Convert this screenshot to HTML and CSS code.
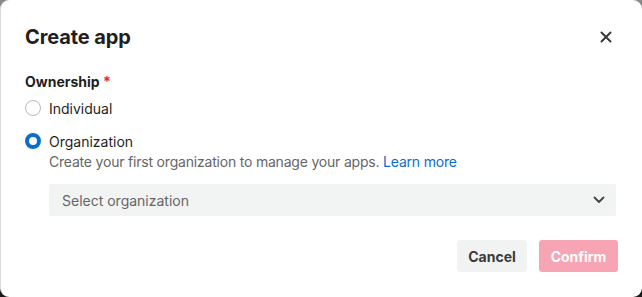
FILE: index.html
```html
<!DOCTYPE html>
<html lang="en">

<head>
    <meta charset="UTF-8">
    <meta name="viewport" content="width=device-width, initial-scale=1.0">
    <title>Create app</title>
    <link rel="stylesheet" href="styles.css">
</head>

<body>
    <div class="dialog">
        <div class="head">
            <h2>Create app</h2>
            <button class="close" aria-label="Close">
                <svg width="12" height="12" viewBox="0 0 12 12">
                    <path d="M1.5 1.5 L10.5 10.5 M10.5 1.5 L1.5 10.5" stroke="#3a3a3a" stroke-width="2" stroke-linecap="round" />
                </svg>
            </button>
        </div>

        <div class="field">
            <div class="label">Ownership <span class="req">*</span></div>
            <label class="radio">
                <span class="dot"></span>
                <span>Individual</span>
            </label>
            <label class="radio">
                <span class="dot on"></span>
                <span>Organization</span>
            </label>
            <p class="hint">Create your first organization to manage your apps. <a href="#">Learn more</a></p>
            <div class="select">
                <span>Select organization</span>
                <svg width="12" height="8" viewBox="0 0 12 8">
                    <path d="M1.5 1.5 L6 6 L10.5 1.5" fill="none" stroke="#444" stroke-width="1.8" stroke-linecap="round" stroke-linejoin="round" />
                </svg>
            </div>
        </div>

        <div class="foot">
            <button class="btn cancel">Cancel</button>
            <button class="btn confirm">Confirm</button>
        </div>
    </div>
</body>

</html>
```

FILE: styles.css
```css
body {
    margin: 0;
    height: 297px;
    background: linear-gradient(to bottom, #8a8a8a, #1a1a1a);
    font-family: Inter, "Noto Sans", Arial, sans-serif;
    color: #1f1f1f;
}

.dialog {
    box-sizing: border-box;
    height: 297px;
    background: #fff;
    border-left: 1px solid #d9d9d9;
    border-radius: 9px;
    padding: 22px 24px 0 24px;
}

.head {
    display: flex;
    align-items: center;
    justify-content: space-between;
    height: 30px;
}

.head h2 {
    margin: 0;
    font-size: 20px;
    font-weight: 700;
    color: #1f1f1f;
    letter-spacing: -0.1px;
}

.close {
    border: none;
    background: none;
    padding: 0;
    margin-right: 6px;
    width: 12px;
    height: 12px;
    display: flex;
}

.field {
    margin-top: 21px;
}

.label {
    font-size: 14px;
    font-weight: 700;
    height: 18px;
    line-height: 18px;
}

.req {
    color: #e02a3c;
}

.radio {
    display: flex;
    align-items: center;
    gap: 8px;
    font-size: 14px;
    height: 18px;
    margin-top: 8px;
}

.radio + .radio {
    margin-top: 15px;
}

.dot {
    box-sizing: border-box;
    width: 16px;
    height: 16px;
    border-radius: 50%;
    border: 1px solid #b8b8b8;
    background: #fff;
}

.dot.on {
    border: 4.5px solid #0a6ec8;
}

.hint {
    margin: 3px 0 0 24px;
    font-size: 14px;
    line-height: 18px;
    color: #666;
    letter-spacing: -0.2px;
}

.hint a {
    color: #0a6ec8;
    text-decoration: none;
}

.select {
    margin: 13px 2px 0 24px;
    height: 32px;
    background: #f2f3f3;
    border-radius: 2px;
    display: flex;
    align-items: center;
    justify-content: space-between;
    padding: 0 11px 0 13px;
    font-size: 14px;
    color: #666;
}

.foot {
    display: flex;
    justify-content: flex-end;
    gap: 12px;
    margin-top: 24px;
}

.btn {
    height: 32px;
    border: none;
    border-radius: 3px;
    font-family: Inter, "Noto Sans", Arial, sans-serif;
    font-size: 14px;
    font-weight: 700;
}

.cancel {
    width: 70px;
    background: #f1f2f2;
    color: #3a3a3a;
}

.confirm {
    width: 79px;
    background: #f7a5b4;
    color: #fff;
}
```
